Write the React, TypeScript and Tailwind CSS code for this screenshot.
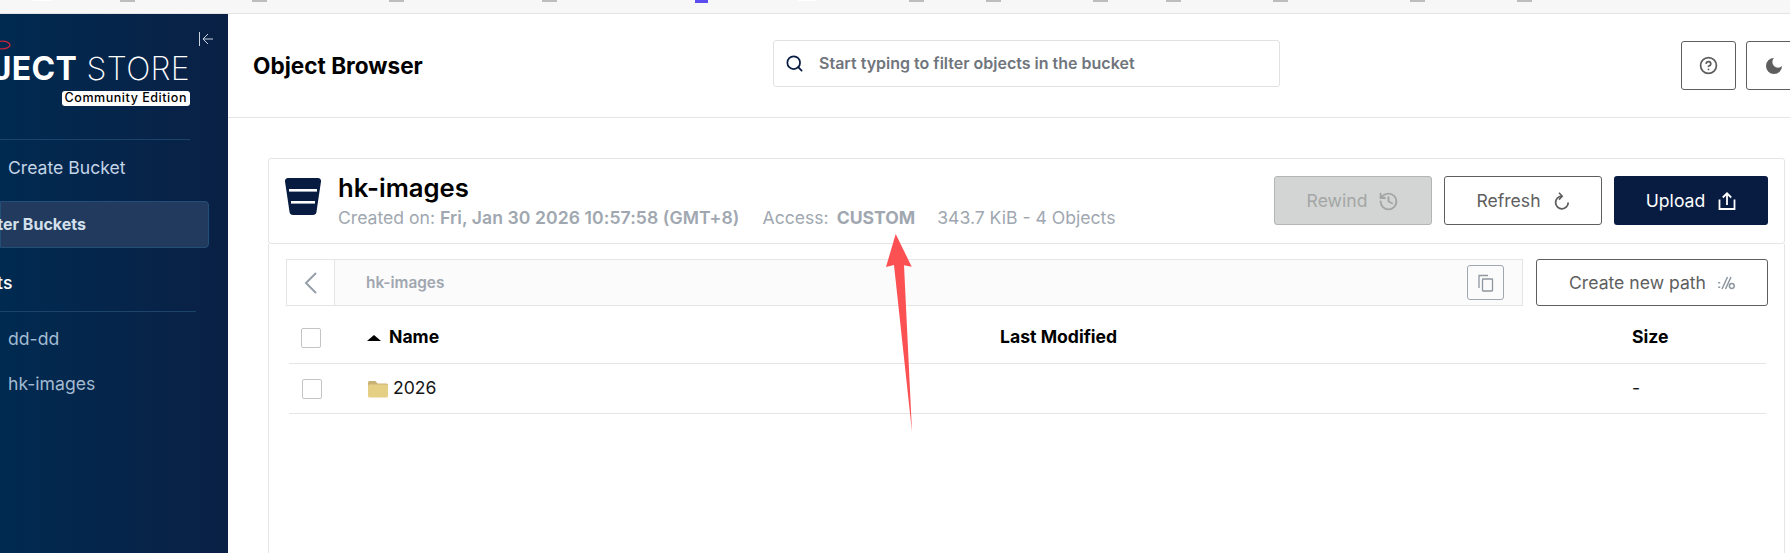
import { CircleHelp, History, Search } from 'lucide-react';

const font = "font-['Inter','Liberation_Sans',sans-serif]";

// tops of the favicons of the browser's bookmarks bar, cropped by the screenshot
const Ticks = () => (
    <div className="flex h-[14px] items-start bg-[#f7f7f7] border-b border-[#e4e4e4]">
        <span className="ml-[33px] w-[18px] h-[1px] bg-white" />
        <span className="ml-[69px] w-[15px] h-[2px] bg-[#bdbdbd]" />
        <span className="ml-[117px] w-[15px] h-[2px] bg-[#bdbdbd]" />
        <span className="ml-[122px] w-[15px] h-[2px] bg-[#bdbdbd]" />
        <span className="ml-[138px] w-[15px] h-[2px] bg-[#bdbdbd]" />
        <span className="ml-[138px] w-[13px] h-[3px] bg-[#5b4df0]" />
        <span className="ml-[90px] w-[18px] h-[1px] bg-white" />
        <span className="ml-[93px] w-[15px] h-[2px] bg-[#bdbdbd]" />
        <span className="ml-[62px] w-[15px] h-[2px] bg-[#bdbdbd]" />
        <span className="ml-[92px] w-[15px] h-[2px] bg-[#bdbdbd]" />
        <span className="ml-[58px] w-[15px] h-[2px] bg-[#bdbdbd]" />
        <span className="ml-[92px] w-[15px] h-[2px] bg-[#bdbdbd]" />
        <span className="ml-[122px] w-[15px] h-[2px] bg-[#bdbdbd]" />
        <span className="ml-[92px] w-[15px] h-[2px] bg-[#bdbdbd]" />
    </div>
);

const Sidebar = () => (
    <aside className="w-[228px] shrink-0 h-full overflow-hidden bg-gradient-to-r from-[#002a50] to-[#0a2045]">
        <div className="relative h-[125px]">
            <svg className="absolute left-[-6px] top-[26px]" width="17" height="10" viewBox="0 0 17 10" fill="none">
                <ellipse cx="8.500" cy="5" rx="7.500" ry="3.800" stroke="#c8243c" strokeWidth="1.300" />
            </svg>
            <svg className="absolute left-[198px] top-[17px]" width="16" height="16" viewBox="0 0 16 16" fill="none" stroke="#c9d4df" strokeWidth="1">
                <path d="M1.500 1v14M15 8H5M10 3L5 8l5 5" />
            </svg>
            <div className="absolute right-[38px] top-[36px] flex flex-col items-end">
                <div className="text-[32px] leading-[38px] whitespace-nowrap text-white tracking-[0.3px]">
                    <span className="font-bold">OBJECT</span> <span className="font-extralight">STORE</span>
                </div>
                <div className="mt-[3px] bg-white rounded-[3px] px-[3px] h-[15px] flex items-center text-[12.5px] font-medium tracking-[0.55px] text-black whitespace-nowrap">
                    Community Edition
                </div>
            </div>
        </div>
        <div className="w-[190px] h-px bg-[#1c4369]" />
        <div className="pl-[8px] mt-[16px] h-[24px] leading-[24px] text-[17.6px] text-[#c3d5e8] whitespace-nowrap">Create Bucket</div>
        <div className="mt-[21px] w-[209px] h-[47px] pb-[1px] bg-[#223a5e] border border-[#234e77] rounded-r-[4px] flex items-center text-[16px] font-bold text-[#d3e0ec] whitespace-nowrap">
            <span className="ml-[-22px]">Filter Buckets</span>
        </div>
        <div className="mt-[23px] h-[24px] leading-[24px] ml-[-55px] text-[17.6px] font-medium text-white whitespace-nowrap">Buckets</div>
        <div className="mt-[16px] w-[196px] h-px bg-[#1c4369]" />
        <div className="pl-[8px] mt-[15px] h-[24px] leading-[24px] text-[17.6px] text-[#a3bbd2]">dd-dd</div>
        <div className="pl-[8px] mt-[21px] h-[24px] leading-[24px] text-[17.6px] text-[#a3bbd2]">hk-images</div>
    </aside>
);

const Header = () => (
    <header className="h-[104px] shrink-0 border-b border-[#e5e5e5] flex items-start">
        <h1 className="ml-[25px] mt-[36px] w-[520px] shrink-0 text-[22.6px] leading-[32px] font-bold text-black">Object Browser</h1>
        <div className="mt-[26px] w-[507px] shrink-0 h-[47px] pb-[1px] border border-[#e2e2e2] rounded-[3px] flex items-center pl-[11px]">
            <Search size={19} color="#081c42" strokeWidth={2.2} />
            <span className="ml-[15px] text-[16px] font-semibold text-[#70757c]">Start typing to filter objects in the bucket</span>
        </div>
        <button className="ml-[401px] mt-[27px] w-[55px] h-[49px] shrink-0 border border-[#5e5e5e] rounded-[3px] flex items-center justify-center">
            <CircleHelp size={19} color="#5e5e5e" strokeWidth={2.2} />
        </button>
        <button className="ml-[10px] mt-[27px] w-[55px] h-[49px] shrink-0 border border-[#5e5e5e] rounded-[3px] flex items-center justify-center">
            <svg width="18" height="18" viewBox="0 0 18 18" fill="#5e5e5e">
                <path d="M9 1a8 8 0 1 0 8 8 5.500 5.500 0 0 1-8-8z" />
            </svg>
        </button>
    </header>
);

const BucketIcon = () => (
    <svg width="36" height="37" viewBox="0 0 36 37" className="shrink-0">
        <path d="M3 0h30a3 3 0 0 1 3 3.400L31.600 33a4 4 0 0 1-4 4H8.400a4 4 0 0 1-4-4L0 3.400A3 3 0 0 1 3 0z" fill="#081c42" />
        <rect x="4" y="11" width="28" height="2.600" fill="#fff" />
        <rect x="6" y="23" width="24" height="2.600" fill="#fff" />
    </svg>
);

const BucketCard = () => (
    <div className="h-[86px] border border-[#e5e5e5] rounded-[3px] flex items-start">
        <div className="ml-[16px] mt-[19px]"><BucketIcon /></div>
        <div className="ml-[17px] mt-[15px]">
            <div className="text-[25.7px] leading-[28px] font-semibold text-black">hk-images</div>
            <div className="mt-[5px] text-[17.6px] leading-[22px] text-[#a0a7b0] whitespace-nowrap">
                Created on: <span className="font-semibold tracking-[0.07px]">Fri, Jan 30 2026 10:57:58 (GMT+8)</span>
                <span className="ml-[23px]">Access:</span>
                <span className="ml-[8px] font-bold">CUSTOM</span>
                <span className="ml-[22px]">343.7 KiB - 4 Objects</span>
            </div>
        </div>
        <div className="ml-auto mr-[16px] mt-[17px] flex gap-[12px]">
            <button className="w-[158px] h-[49px] pt-[1px] bg-[#d3d5d4] border border-[#b4b6b5] rounded-[3px] flex items-center justify-center gap-[11px] text-[17.6px] text-[#a4a6a5]">
                Rewind <History size={21} color="#a4a6a5" strokeWidth={2.2} />
            </button>
            <button className="w-[158px] h-[49px] pt-[1px] border border-[#5e5e5e] rounded-[3px] flex items-center justify-center gap-[13px] text-[17.6px] text-[#5e5e5e]">
                Refresh
                <svg width="16" height="18" viewBox="0 0 16 18" fill="none" stroke="#5e5e5e" strokeWidth="1.800">
                    <path d="M14.200 10.500a6.300 6.300 0 1 1-6.700-6.300" />
                    <path d="M5 .8l3.200 3.400L5 7.600" strokeWidth="1.600" />
                </svg>
            </button>
            <button className="w-[154px] h-[49px] pt-[1px] bg-[#081c42] rounded-[3px] flex items-center justify-center gap-[13px] text-[17.6px] text-white">
                Upload
                <svg width="18" height="18" viewBox="0 0 18 18" fill="none" stroke="#fff" strokeWidth="1.800">
                    <path d="M9 13V1.500M4.800 5.500L9 1.300l4.200 4.200M1.500 7.500v9.500h15V7.500" />
                </svg>
            </button>
        </div>
    </div>
);

const Checkbox = () => <span className="block w-[20px] h-[20px] border border-[#c4c4c4] rounded-[2px] bg-white" />;

const Breadcrumb = () => (
    <div className="flex items-start">
        <div className="w-[1237px] h-[47px] border border-[#e5e5e5] bg-[#fbfbfb] flex items-center">
            <div className="w-[48px] h-full bg-white border-r border-[#e5e5e5] flex items-center justify-center">
                <svg width="14" height="22" viewBox="0 0 14 22" fill="none" stroke="#969fa9" strokeWidth="2">
                    <path d="M12 1L2 11l10 10" />
                </svg>
            </div>
            <span className="ml-[31px] text-[15.4px] font-semibold text-[#a0a7b0]">hk-images</span>
            <button className="ml-auto mr-[18px] w-[37px] h-[35px] border border-[#a0a7b0] rounded-[3px] flex items-center justify-center">
                <svg width="16" height="18" viewBox="0 0 16 18" fill="none" stroke="#8e969f" strokeWidth="1.300">
                    <path d="M1 14V1.500h9" />
                    <rect x="4.500" y="5" width="10" height="12" rx="0.500" />
                </svg>
            </button>
        </div>
        <button className="ml-[13px] w-[232px] h-[47px] pt-[1px] border border-[#5e5e5e] rounded-[3px] flex items-center justify-center gap-[12px] text-[17.6px] text-[#5e5e5e]">
            Create new path
            <svg width="17" height="14" viewBox="0 0 17 14" fill="none" stroke="#8e969f" strokeWidth="1.500">
                <path d="M1.200 6v1.600M1.200 10.500v1.600" strokeWidth="2" />
                <path d="M9.500 1L4 13M13 1L7.500 13" />
                <circle cx="13.800" cy="10" r="2.400" />
            </svg>
        </button>
    </div>
);

const ObjectTable = () => (
    <div className="ml-[3px] w-[1477px] text-[17.6px]">
        <div className="h-[58px] pt-[6px] border-b border-[#e5e5e5] flex items-center font-bold text-black">
            <div className="ml-[12px]"><Checkbox /></div>
            <div className="ml-[46px] w-[0] h-[0] border-x-[7px] border-x-transparent border-b-[6px] border-b-black" />
            <span className="ml-[8px] w-[611px]">Name</span>
            <span className="w-[632px]">Last Modified</span>
            <span>Size</span>
        </div>
        <div className="h-[50px] border-b border-[#e5e5e5] flex items-center text-[#161616]">
            <div className="ml-[13px]"><Checkbox /></div>
            <svg className="ml-[46px] shrink-0" width="20" height="18" viewBox="0 0 20 18">
                <path d="M1.500 1h6l2 2.500h9a1.500 1.500 0 0 1 1.500 1.500v3H0V2.500A1.500 1.500 0 0 1 1.500 1z" fill="#c9b274" />
                <path d="M1.500 4.500h17A1.500 1.500 0 0 1 20 6v10a1.500 1.500 0 0 1-1.500 1.500h-17A1.500 1.500 0 0 1 0 16V6a1.500 1.500 0 0 1 1.500-1.500z" fill="#e5cf85" />
            </svg>
            <span className="ml-[5px] w-[1239px]">2026</span>
            <span>-</span>
        </div>
    </div>
);

// red arrow drawn on the screenshot, pointing at the access policy
const Arrow = () => (
    <svg className="absolute left-[880px] top-[230px]" width="40" height="206" viewBox="0 0 40 206">
        <path d="M15.700 4L31.700 36.700 24 35.300 32 202 14 35 6 37z" fill="#fb5153" />
    </svg>
);

export default function App() {
    return (
        <div className={`relative w-[1790px] h-[553px] overflow-hidden bg-white ${font}`}>
            <Ticks />
            <div className="flex h-[539px]">
                <Sidebar />
                <main className="flex-1 min-w-0 flex flex-col overflow-hidden">
                    <Header />
                    <div className="ml-[40px] mr-[5px] mt-[40px] flex-1 flex flex-col">
                        <BucketCard />
                        <div className="flex-1 border-x border-[#e5e5e5] pt-[15px] pl-[17px]">
                            <Breadcrumb />
                            <ObjectTable />
                        </div>
                    </div>
                </main>
            </div>
            <Arrow />
        </div>
    );
}
